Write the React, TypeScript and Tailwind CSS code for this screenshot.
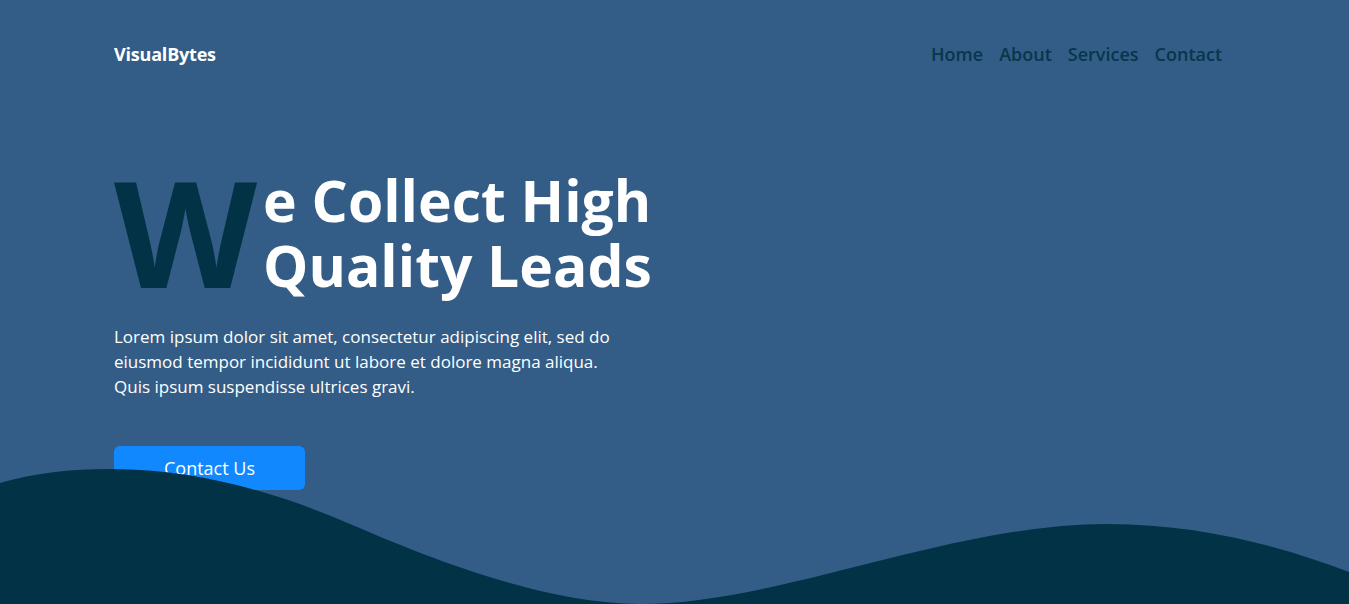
const links = ['Home', 'About', 'Services', 'Contact']

const Wave = () => (
  <svg
    className="absolute bottom-0 left-0 w-full h-[140px]"
    viewBox="0 0 1349 140"
    preserveAspectRatio="none"
  >
    <path
      d="M0,19 C35,9 70,5 110,5 C200,5 280,30 350,60 C420,90 540,140 640,140 C780,140 950,60 1107,60 C1200,60 1280,82 1349,108 V140 H0 Z"
      fill="#023245"
    />
  </svg>
)

export default function App() {
  return (
    <div
      className="relative h-[604px] overflow-hidden bg-[#335d86]"
      style={{ fontFamily: '"Open Sans", "Liberation Sans", sans-serif' }}
    >
      <header className="flex h-[108px] items-center justify-between pl-[114px] pr-[127px]">
        <a className="text-[18px] font-bold tracking-[-0.2px] text-white">VisualBytes</a>
        <nav className="flex gap-[16px]">
          {links.map((link) => (
            <a key={link} className="text-[18px] font-semibold text-[#08364b]">
              {link}
            </a>
          ))}
        </nav>
      </header>

      <section className="pl-[114px] pt-[60px]">
        <h1 className="flex items-start">
          <span className="mt-[3px] text-[148px] font-bold leading-[120px] text-[#023245]">
            W
          </span>
          <span className="ml-[6px] text-[57px] font-bold leading-[65px] text-white">
            e Collect High
            <br />
            Quality Leads
          </span>
        </h1>
        <p className="mt-[26px] text-[17px] leading-[25px] text-white">
          Lorem ipsum dolor sit amet, consectetur adipiscing elit, sed do
          <br />
          eiusmod tempor incididunt ut labore et dolore magna aliqua.
          <br />
          Quis ipsum suspendisse ultrices gravi.
        </p>
        <button className="mt-[47px] h-[44px] w-[191px] rounded-md bg-[#1288ff] text-[18px] text-white">
          Contact Us
        </button>
      </section>

      <Wave />
    </div>
  )
}
